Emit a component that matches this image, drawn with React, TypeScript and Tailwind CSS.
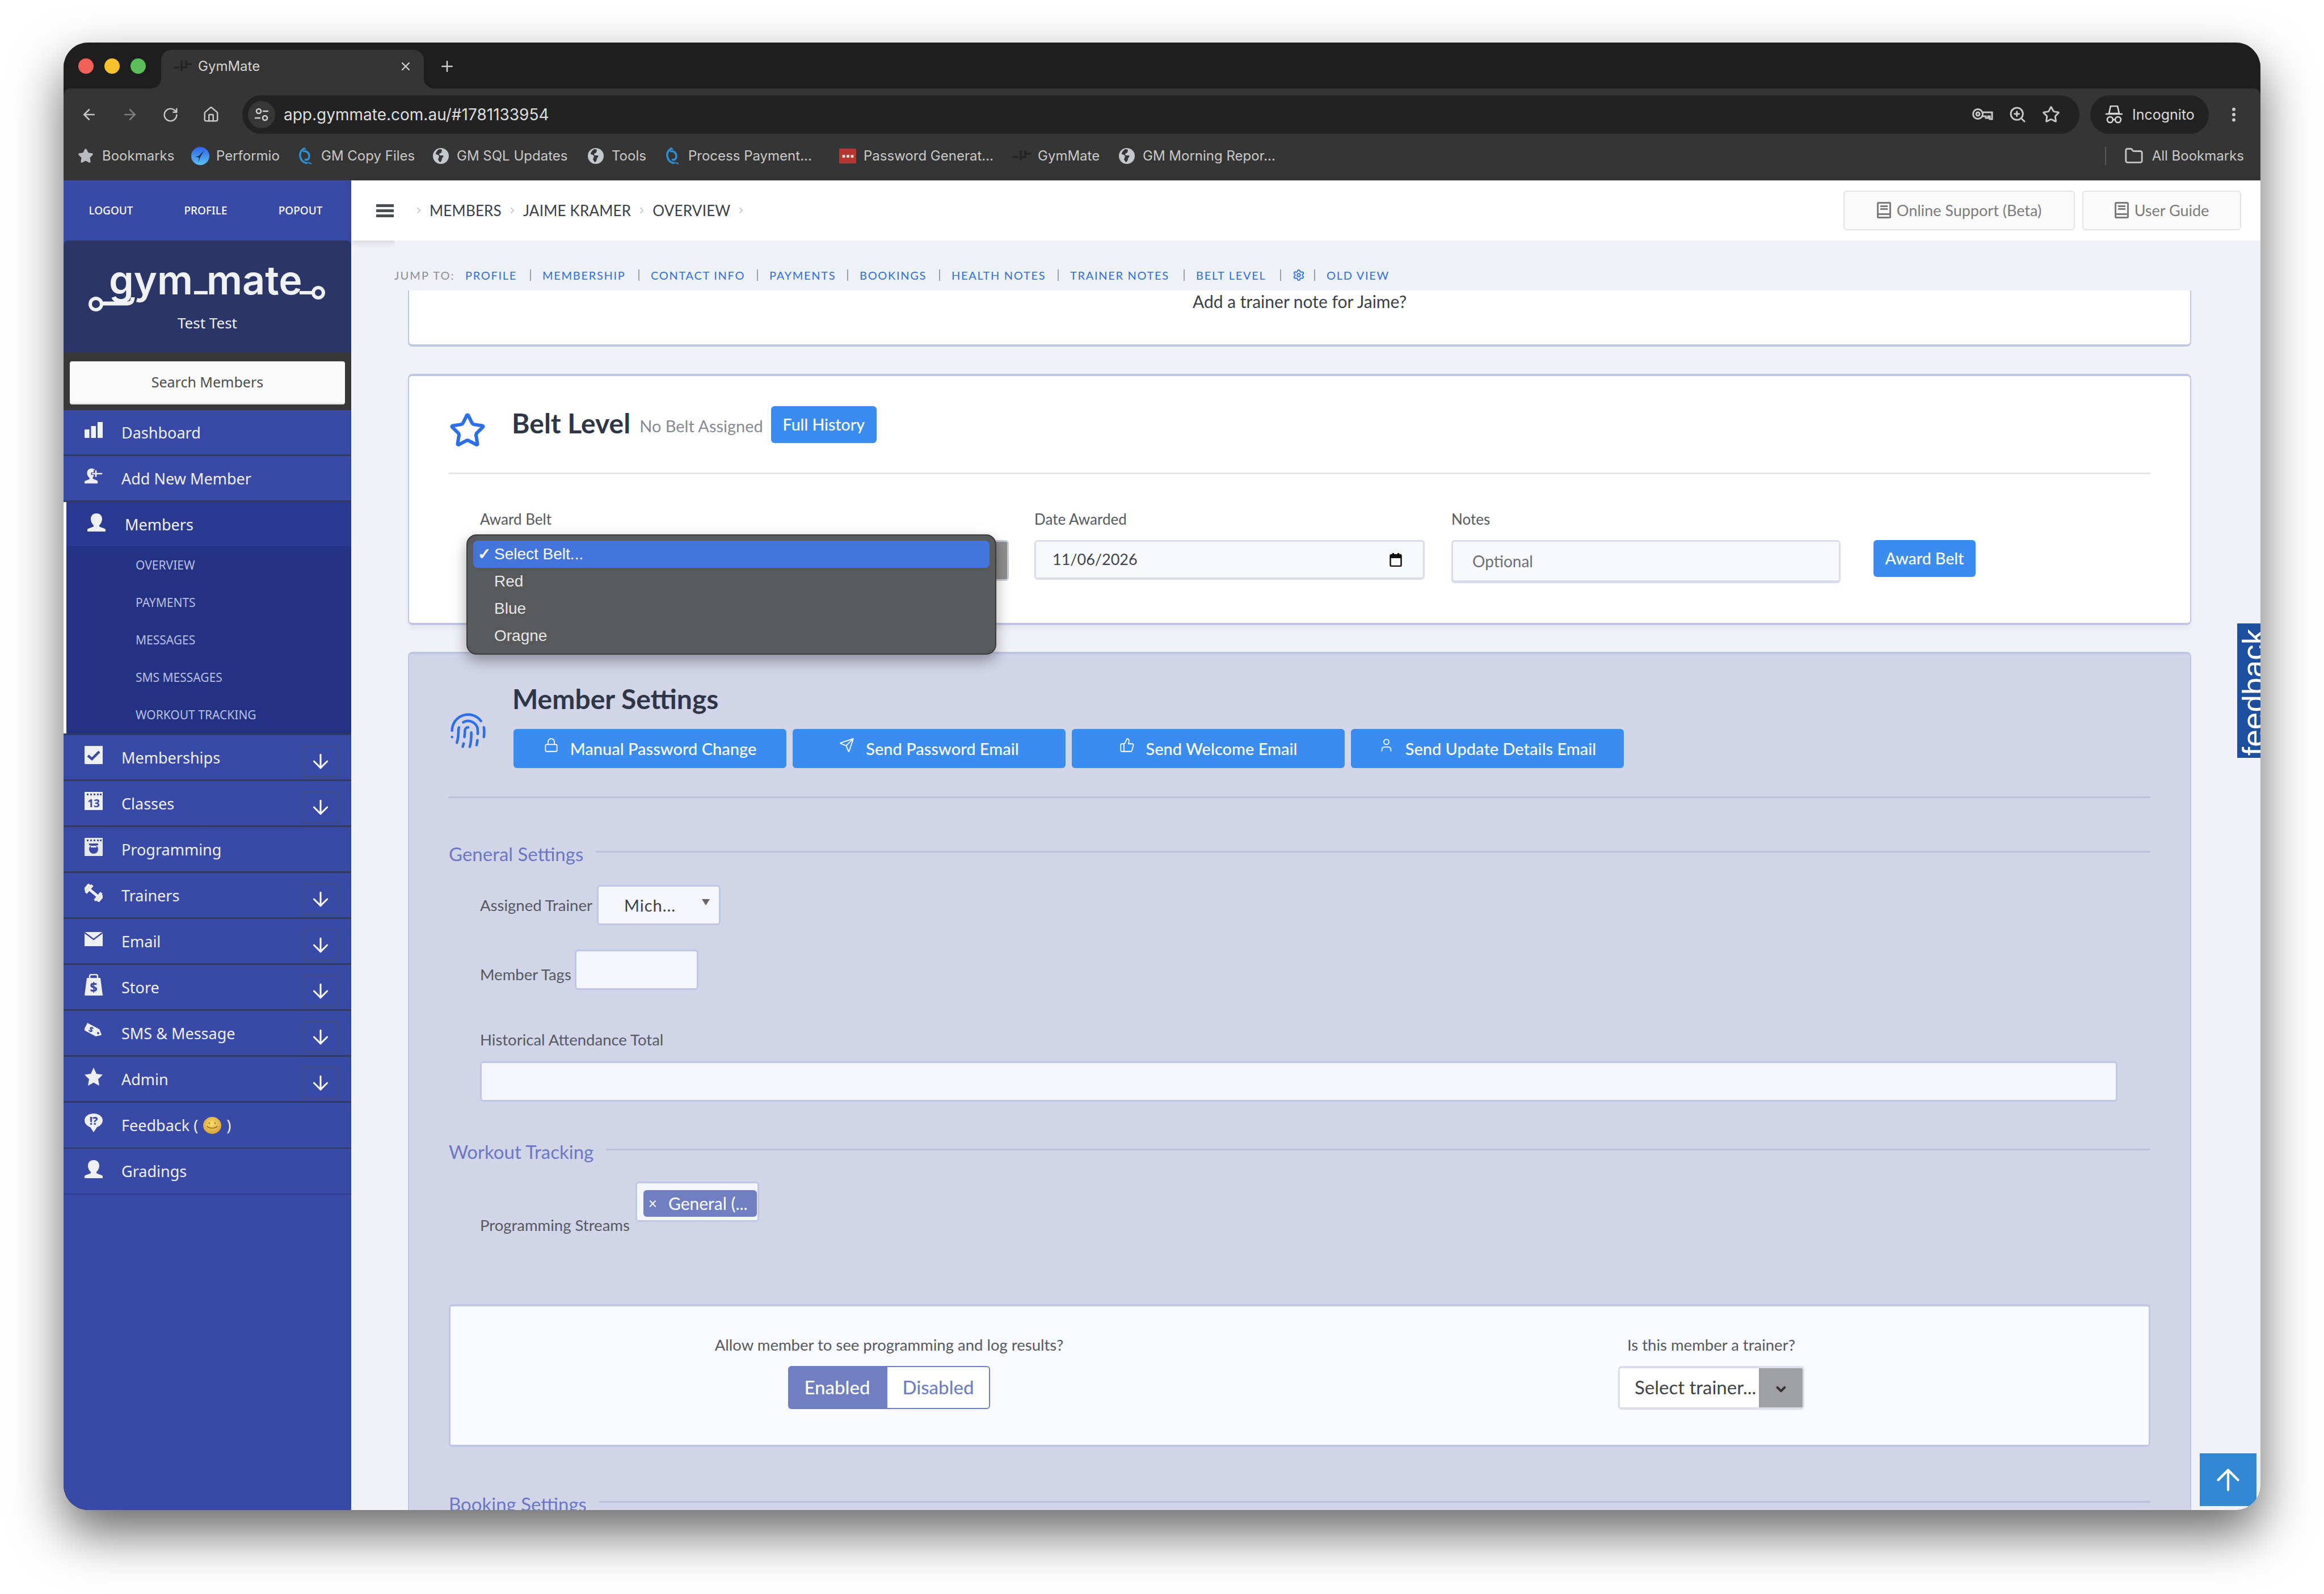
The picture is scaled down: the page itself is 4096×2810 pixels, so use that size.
import React from "react";
import { ArrowLeft, ArrowRight, RotateCw, Home, ZoomIn, Star, Folder, MoreVertical, X, Plus, Lock, Send, ThumbsUp, User, Fingerprint, ChevronRight, Settings, ArrowUp, ArrowDown, ChevronDown } from "lucide-react";

const Globe = () => (
  <svg width="30" height="30" viewBox="0 0 30 30" className="shrink-0">
    <circle cx="15" cy="15" r="14" fill="#c4c7cc" />
    <path d="M12 3c-3 2-6 5-6 9 3 0 5 1 6 4l-2 5 3 5c3-1 4-4 4-7 2-2 3-3 2-5h-6l-1-3 4-2 1-5c-2-1-3-1-5-1z" fill="#353535" />
  </svg>
);
const Spiral = () => (
  <svg width="26" height="32" viewBox="0 0 26 32" className="shrink-0" fill="none">
    <path d="M12 2C5 6 2 12 5 20c2 6 8 9 12 8M9 8c5-2 11 2 11 8s-4 8-8 6" stroke="#2e8fd6" strokeWidth="3.5" />
    <path d="M18 27l6 3M12 2l2 3" stroke="#2e8fd6" strokeWidth="2" />
  </svg>
);
const Performio = () => (
  <svg width="32" height="32" viewBox="0 0 32 32" className="shrink-0">
    <defs>
      <linearGradient id="pf" x1="0" y1="0" x2="0" y2="1">
        <stop offset="0" stopColor="#2f62e8" />
        <stop offset="1" stopColor="#58c2f5" />
      </linearGradient>
    </defs>
    <circle cx="16" cy="16" r="16" fill="url(#pf)" />
    <path d="M23 6L13 16l-6 1 7 2-2 9 5-12z" fill="#20304f" />
  </svg>
);
const GmFav = () => (
  <svg width="32" height="24" viewBox="0 0 32 24" className="shrink-0" fill="none" stroke="#222" strokeWidth="3">
    <path d="M0 14h10M14 2v18M22 2v12H14M22 8h10" />
  </svg>
);
const Bm = ({ icon, label, w, ml }: { icon: React.ReactNode; label: string; w: string; ml: string }) => (
  <div className={`flex items-center ${ml}`}>
    <span className="w-[30px] flex justify-center shrink-0">{icon}</span>
    <span className={`ml-[13px] text-[24px] leading-none text-[#c9c9c9] whitespace-nowrap ${w}`}>{label}</span>
  </div>
);

const Bars = () => (
  <svg width="32" height="28" viewBox="0 0 32 28" fill="#f0f1f5"><rect x="0" y="13" width="8.5" height="15" /><rect x="11.5" y="7" width="8.5" height="21" /><rect x="23" y="0" width="9" height="28" /></svg>
);
const Person = () => (
  <svg width="32" height="32" viewBox="0 0 32 32" fill="#eeeff3"><path d="M16 0c6 0 10 4 10 10 0 5-3 9-5 11v2c3 2 9 3 11 5v4H0v-4c2-2 8-3 11-5v-2c-2-2-5-6-5-11C6 4 10 0 16 0z" /></svg>
);
const PersonPlus = () => (
  <svg width="36" height="30" viewBox="0 0 36 30" fill="#eeeff3"><path d="M14 0c3 0 6 1 7 3h-3v5h-5v5h5v3c-1 1-2 2-2 4 3 2 8 3 10 5v5H0v-4c2-2 8-3 10-5v-2c-2-2-5-5-5-10C5 4 9 0 14 0z" /><path d="M21 4h3v5h11v3H24v5h-3v-5h-6V9h6z" /></svg>
);
const CheckBox = () => (
  <svg width="32" height="32" viewBox="0 0 32 32"><rect width="32" height="32" fill="#eeeff3" /><path d="M6 17l7 6 13-13" fill="none" stroke="#384aa6" strokeWidth="4.5" /></svg>
);
const Cal13 = () => (
  <svg width="32" height="32" viewBox="0 0 32 32"><rect width="32" height="32" fill="#eeeff3" /><g fill="#384aa6"><rect x="4" y="3" width="3" height="3" /><rect x="10" y="3" width="3" height="3" /><rect x="16" y="3" width="3" height="3" /><rect x="22" y="3" width="3" height="3" /><rect x="27" y="3" width="3" height="3" /></g><text x="16" y="27" textAnchor="middle" fontSize="19" fontWeight="700" fontFamily="Noto Sans, sans-serif" fill="#384aa6">13</text></svg>
);
const CalBell = () => (
  <svg width="32" height="32" viewBox="0 0 32 32"><rect width="32" height="32" fill="#e7e8ee" /><g fill="#384aa6"><rect x="4" y="3" width="3" height="3" /><rect x="10" y="3" width="3" height="3" /><rect x="16" y="3" width="3" height="3" /><rect x="22" y="3" width="3" height="3" /><rect x="27" y="3" width="3" height="3" /><circle cx="16" cy="20" r="8" /><path d="M8 10h16v3H21v4H11v-4H8z" /></g><path d="M11 14h10v3H11z" fill="#e7e8ee" /></svg>
);
const Dumbbell = () => (
  <svg width="32" height="32" viewBox="0 0 32 32" fill="#eeeff3"><g transform="rotate(40 16 16)"><rect x="6" y="13.5" width="20" height="5" /><rect x="-2" y="9" width="5" height="14" /><rect x="3" y="7" width="5" height="18" /><rect x="24" y="7" width="5" height="18" /><rect x="29" y="9" width="5" height="14" /></g></svg>
);
const Mail = () => (
  <svg width="32" height="25" viewBox="0 0 32 25"><rect width="32" height="25" fill="#eeeff3" /><path d="M0 1l16 12L32 1" fill="none" stroke="#384aa6" strokeWidth="2.5" /></svg>
);
const Bag = () => (
  <svg width="32" height="38" viewBox="0 0 32 38"><path d="M9 8V4c0-2 1-3 3-3h8c2 0 3 1 3 3v4" fill="none" stroke="#eeeff3" strokeWidth="2.5" /><path d="M4 7h24l4 31H0z" fill="#eeeff3" /><text x="16" y="32" textAnchor="middle" fontSize="23" fontWeight="800" fontFamily="Noto Sans, sans-serif" fill="#384aa6">$</text></svg>
);
const Tag = () => (
  <svg width="32" height="32" viewBox="0 0 32 32"><g transform="rotate(28 16 16)"><path d="M0 9h24l8 7-8 7H0z" fill="#eeeff3" /><text x="11" y="21" textAnchor="middle" fontSize="13" fontWeight="800" fontFamily="Noto Sans, sans-serif" fill="#384aa6">$</text><circle cx="25" cy="16" r="2" fill="#384aa6" /></g></svg>
);
const StarF = () => (
  <svg width="32" height="32" viewBox="0 0 32 32" fill="#eeeff3"><path d="M16 0l5 11 11 1.500-8 8 2 11.500-10-5.500L6 32l2-11.500-8-8 11-1.500z" /></svg>
);
const Bubble = () => (
  <svg width="32" height="34" viewBox="0 0 32 34"><path d="M16 0c9 0 16 5 16 12 0 6-5 10-10 12l-6 9-6-9C5 22 0 18 0 12 0 5 7 0 16 0z" fill="#eeeff3" /><text x="16" y="20" textAnchor="middle" fontSize="19" fontWeight="800" fontFamily="Noto Sans, sans-serif" fill="#384aa6">!?</text></svg>
);
const Smiley = () => (
  <svg width="32" height="30" viewBox="0 0 32 30" className="mx-[9px]"><defs><radialGradient id="sm" cx=".5" cy=".4" r=".6"><stop offset="0" stopColor="#f6dc6e" /><stop offset="1" stopColor="#d8a238" /></radialGradient></defs><ellipse cx="16" cy="15" rx="16" ry="15" fill="url(#sm)" /><path d="M7 16c3 5 15 5 18 0" stroke="#9a6a16" strokeWidth="1.500" fill="none" /><circle cx="11" cy="11" r="1.300" fill="#9a6a16" /><circle cx="21" cy="11" r="1.300" fill="#9a6a16" /></svg>
);
const BookIcon = () => (
  <svg width="25" height="29" viewBox="0 0 25 29" className="shrink-0 -mt-[2px]"><rect x="1.500" y="1.500" width="22" height="26" rx="1.500" fill="none" stroke="#7b7b7b" strokeWidth="3" /><rect x="1" y="20" width="23" height="3" fill="#7b7b7b" /><rect x="6" y="6" width="13" height="3" fill="#7b7b7b" /><rect x="6" y="11" width="13" height="3" fill="#7b7b7b" /></svg>
);

const NavItem = ({ icon, label, arrow, last, thin }: { icon: React.ReactNode; label: React.ReactNode; arrow?: boolean; last?: boolean; thin?: boolean }) => (
  <div className={`relative h-[81px] flex items-center pl-[37px] shrink-0 ${last ? "border-b-2 border-[#2f3f93]" : thin ? "border-b-2 border-[#343a5e]" : "border-b-[3px] border-[#343a5e]"}`}>
    <span className="w-[32px] flex justify-center -mt-[8px] shrink-0">{icon}</span>
    <span className="ml-[33px] text-[27px] leading-none text-[#eff0f6] font-['Noto_Sans',sans-serif] flex items-center">{label}</span>
    {arrow && (
      <span className="absolute right-[23px] top-[18px] w-[63px] h-[56px] border-2 border-[#414a7e] flex items-center justify-center">
        <ArrowDown size={40} color="#ffffff" strokeWidth={1.8} />
      </span>
    )}
  </div>
);

const Logo = () => (
  <svg width="420" height="106" viewBox="0 -20 420 106" fill="none" className="block">
    <text x="36" y="54" fontFamily="Inter, sans-serif" fontSize="70" fontWeight="600" fill="#eff1f2">gym</text>
    <text x="208" y="54" fontFamily="Inter, sans-serif" fontSize="70" fontWeight="600" fill="#eff1f2">mate</text>
    <circle cx="13" cy="71" r="10" stroke="#eff1f2" strokeWidth="6" />
    <path d="M23 70h44c8 0 11-3 11-11" stroke="#eff1f2" strokeWidth="7" />
    <path d="M186 51h24" stroke="#eff1f2" strokeWidth="6" />
    <path d="M372 51h24" stroke="#eff1f2" strokeWidth="6" />
    <circle cx="405" cy="51" r="9" stroke="#eff1f2" strokeWidth="6" />
  </svg>
);

const Sidebar = () => (
  <aside className="w-[507px] shrink-0 bg-[#384aa6] flex flex-col font-['Noto_Sans',sans-serif]">
    <div className="h-[106px] grid grid-cols-3 pr-[6px] items-center text-center text-[19px] font-medium text-white">
      <span>LOGOUT</span>
      <span>PROFILE</span>
      <span>POPOUT</span>
    </div>
    <div className="h-[197px] bg-[#2a3668] rounded-t-[8px] flex flex-col items-center pt-[21px]">
      <Logo />
      <span className="mt-[5px] text-[26px] leading-none text-[#f0f1f4]">Test Test</span>
    </div>
    <div className="h-[102px] bg-[#373737] px-[11px] pt-[16px]">
      <div className="h-[76px] rounded-[4px] bg-[#fafafa] border-b-[3px] border-[#e6e6e6] flex items-center justify-center text-[25px] text-[#4d4d4d]">Search Members</div>
    </div>
    <NavItem icon={<Bars />} label="Dashboard" />
    <NavItem icon={<PersonPlus />} label="Add New Member" />
    <div className="border-l-[5px] border-white">
      <div className="h-[78px] bg-[#2a3a90] flex items-center pl-[37px]">
        <span className="w-[32px] -mt-[6px]"><Person /></span>
        <span className="ml-[34px] text-[27px] leading-none text-[#f0f1f6]">Members</span>
      </div>
      <div className="bg-[#243283] pt-[1px] text-[21px] text-[#b9c0e3] flex flex-col">
        {["OVERVIEW", "PAYMENTS", "MESSAGES", "SMS MESSAGES", "WORKOUT TRACKING"].map((s) => (
          <div key={s} className="h-[66px] flex items-center pl-[122px]">{s}</div>
        ))}
      </div>
    </div>
    <div className="h-[3px] -mt-[1px] bg-[#343a5e]" />
    <NavItem icon={<CheckBox />} label="Memberships" arrow />
    <NavItem icon={<Cal13 />} label="Classes" arrow />
    <NavItem icon={<CalBell />} label="Programming" />
    <NavItem icon={<Dumbbell />} label="Trainers" arrow />
    <NavItem icon={<Mail />} label="Email" arrow />
    <NavItem icon={<Bag />} label="Store" arrow />
    <NavItem icon={<Tag />} label="SMS & Message" arrow />
    <NavItem icon={<StarF />} label="Admin" arrow />
    <NavItem icon={<Bubble />} label={<>Feedback (<Smiley />)</>} thin />
    <NavItem icon={<Person />} label="Gradings" last />
  </aside>
);

const Chrome = () => (
  <div className="shrink-0 font-['Inter',sans-serif]">
    <div className="h-[81px] bg-[#1e1e1e] flex items-end pl-[26px]">
      <div className="flex gap-[19px] self-center mt-[2px]">
        <span className="w-[27px] h-[27px] rounded-full bg-[#f36059]" />
        <span className="w-[27px] h-[27px] rounded-full bg-[#f5c32c]" />
        <span className="w-[27px] h-[27px] rounded-full bg-[#5bbe58]" />
      </div>
      <div className="relative ml-[27px] w-[463px] h-[68px] bg-[#353535] rounded-t-[18px] flex items-center pl-[22px] pb-[10px]">
        <svg width="18" height="18" viewBox="0 0 18 18" className="absolute -left-[18px] bottom-0"><path d="M18 0v18H0C10 18 18 10 18 0z" fill="#353535" /></svg>
        <svg width="18" height="18" viewBox="0 0 18 18" className="absolute -right-[18px] bottom-0"><path d="M0 0v18h18C8 18 0 10 0 0z" fill="#353535" /></svg>
        <GmFav />
        <span className="ml-[11px] text-[24px] leading-none text-[#d4d4d4]">GymMate</span>
        <X size={24} color="#d4d4d4" strokeWidth={2.2} className="absolute right-[20px] top-[17px]" />
      </div>
      <Plus size={30} color="#cfcfcf" strokeWidth={2} className="ml-[26px] mb-[24px]" />
    </div>
    <div className="h-[162px] bg-[#353535] rounded-t-[12px]">
      <div className="flex items-center pt-[12px] h-[80px]">
        <div className="w-[315px] pl-[30px] flex items-center gap-[42px] shrink-0">
          <ArrowLeft size={30} color="#c7c7c7" strokeWidth={2} />
          <ArrowRight size={30} color="#7e7e7e" strokeWidth={2} />
          <RotateCw size={29} color="#c7c7c7" strokeWidth={2} />
          <Home size={30} color="#c7c7c7" strokeWidth={2} />
        </div>
        <div className="w-[3238px] h-[68px] rounded-full bg-[#222222] flex items-center pl-[10px] pr-[34px] shrink-0">
          <span className="w-[48px] h-[48px] rounded-full bg-[#373737] flex items-center justify-center">
            <svg width="26" height="26" viewBox="0 0 26 26" fill="none" stroke="#d0d0d0" strokeWidth="2.6"><circle cx="8" cy="7" r="4" /><path d="M15 7h10M1 19h10" /><circle cx="19" cy="19" r="4" /></svg>
          </span>
          <span className="ml-[15px] text-[28px] leading-none text-[#dedede]">app.gymmate.com.au/#1781133954</span>
          <span className="ml-auto flex items-center gap-[27px]">
            <svg width="37" height="30" viewBox="0 0 37 30" fill="none" stroke="#c7c7c7" strokeWidth="3"><circle cx="10" cy="14" r="8.500" /><circle cx="10" cy="14" r="3" /><path d="M18 11h17v12h-4v-5h-3v3h-4v-3h-6" /></svg>
            <ZoomIn size={32} color="#c7c7c7" strokeWidth={2.2} />
            <Star size={32} color="#c7c7c7" strokeWidth={2.2} />
          </span>
        </div>
        <div className="ml-[19px] w-[209px] h-[68px] rounded-full bg-[#222222] flex items-center pl-[26px] gap-[16px] shrink-0">
          <svg width="32" height="32" viewBox="0 0 32 32" fill="none" stroke="#d8d8d8" strokeWidth="2.6"><path d="M10 1h12l3 13H7z" /><path d="M1 15h30" /><circle cx="9" cy="25" r="5" /><circle cx="23" cy="25" r="5" /><path d="M14 25h4" /></svg>
          <span className="text-[25px] leading-none text-[#dcdcdc]">Incognito</span>
        </div>
        <MoreVertical size={32} color="#cfcfcf" strokeWidth={2.4} className="ml-[28px]" />
      </div>
      <div className="flex items-center h-[72px] pl-[25px] pr-[29px] pt-[6px]">
        <div className="flex items-center text-[24px] leading-none text-[#c9c9c9]">
          <Star size={28} fill="#b8bbc0" color="#b8bbc0" className="mr-[15px]" />
          <span className="w-[126px]">Bookmarks</span>
        </div>
        <Bm ml="ml-[32px]" w="w-[110px]" icon={<Performio />} label="Performio" />
        <Bm ml="ml-[32px]" w="w-[164px]" icon={<Spiral />} label="GM Copy Files" />
        <Bm ml="ml-[32px]" w="w-[196px]" icon={<Globe />} label="GM SQL Updates" />
        <Bm ml="ml-[34px]" w="w-[58px]" icon={<Globe />} label="Tools" />
        <Bm ml="ml-[34px]" w="w-[216px]" icon={<Spiral />} label="Process Payment..." />
        <Bm ml="ml-[50px]" w="w-[227px]" icon={<svg width="32" height="28" viewBox="0 0 32 28"><rect width="32" height="28" rx="2" fill="#b6372f" /><g fill="#f7e4e1"><rect x="6" y="12" width="5" height="5" /><rect x="14" y="12" width="5" height="5" /><rect x="22" y="12" width="5" height="5" /></g></svg>} label="Password Generat..." />
        <Bm ml="ml-[37px]" w="w-[110px]" icon={<GmFav />} label="GymMate" />
        <Bm ml="ml-[32px]" w="w-[232px]" icon={<Globe />} label="GM Morning Repor..." />
        <div className="ml-auto flex items-center">
          <span className="w-[2px] h-[32px] bg-[#5a5a5a]" />
          <Folder size={34} color="#c7c7c7" strokeWidth={2} className="ml-[32px]" />
          <span className="ml-[15px] text-[24px] leading-none text-[#c9c9c9] whitespace-nowrap">All Bookmarks</span>
        </div>
      </div>
    </div>
  </div>
);

const Header = () => (
  <div className="relative z-10 h-[106px] shrink-0 bg-white flex items-center shadow-[0_4px_12px_rgba(0,0,0,0.12)] font-['Lato',sans-serif]">
    <svg width="31" height="23" viewBox="0 0 31 23" fill="#4a4d52" className="ml-[44px]"><rect width="31" height="5" /><rect y="9" width="31" height="5" /><rect y="18" width="31" height="5" /></svg>
    <div className="ml-[35px] flex items-center text-[26px] leading-none text-[#3b4048] tracking-[0.2px]">
      <ChevronRight size={18} color="#b7b7b7" strokeWidth={1.8} className="mr-[10px]" />
      <span>MEMBERS</span>
      <ChevronRight size={18} color="#b7b7b7" strokeWidth={1.8} className="mx-[10px]" />
      <span>JAIME KRAMER</span>
      <ChevronRight size={18} color="#b7b7b7" strokeWidth={1.8} className="mx-[10px]" />
      <span>OVERVIEW</span>
      <ChevronRight size={18} color="#b7b7b7" strokeWidth={1.8} className="ml-[10px]" />
    </div>
    <div className="ml-auto mr-[34px] flex gap-[13px]">
      {[["Online Support (Beta)", "w-[408px]"], ["User Guide", "w-[280px]"]].map(([t, w]) => (
        <div key={t} className={`${w} h-[70px] rounded-[6px] bg-[#fafafa] border-2 border-[#e4e4e4] flex items-center justify-center gap-[10px] text-[27px] text-[#7b7b7b]`}>
          <BookIcon />
          <span>{t}</span>
        </div>
      ))}
    </div>
  </div>
);

const jump = [
  ["PROFILE", "w-[136px]"],
  ["MEMBERSHIP", "w-[191px]"],
  ["CONTACT INFO", "w-[209px]"],
  ["PAYMENTS", "w-[159px]"],
  ["BOOKINGS", "w-[162px]"],
  ["HEALTH NOTES", "w-[209px]"],
  ["TRAINER NOTES", "w-[222px]"],
  ["BELT LEVEL", "w-[170px]"],
];
const Jump = () => (
  <div className="relative z-20 ml-[76px] h-[88px] shrink-0 bg-[#eef1f6] flex items-center pt-[33px] text-[20px] leading-none tracking-[1.7px] font-['Lato',sans-serif] text-[#2f6fe0] whitespace-nowrap">
    <span className="text-[#8a8f98] w-[125px] tracking-[2.1px]">JUMP TO:</span>
    {jump.map(([j, w]) => (
      <div key={j} className={`flex items-center ${w}`}>
        <span>{j}</span>
        <span className="ml-auto mr-[20px] w-[2px] h-[20px] bg-[#9aa0aa]" />
      </div>
    ))}
    <div className="flex items-center w-[60px]">
      <Settings size={22} color="#2f6fe0" strokeWidth={2} />
      <span className="ml-auto mr-[20px] w-[2px] h-[20px] bg-[#9aa0aa]" />
    </div>
    <span>OLD VIEW</span>
  </div>
);

const SectionHead = ({ title, className }: { title: string; className: string }) => (
  <div className={`flex items-center ${className}`}>
    <span className="text-[33px] leading-none text-[#6a78c4] whitespace-nowrap">{title}</span>
    <span className="ml-[22px] flex-1 h-[3px] bg-[#bcbfda] -mt-[8px]" />
  </div>
);

const actions: [string, typeof Lock][] = [
  ["Manual Password Change", Lock],
  ["Send Password Email", Send],
  ["Send Welcome Email", ThumbsUp],
  ["Send Update Details Email", User],
];

const Content = () => (
  <div className="flex-1 overflow-hidden bg-[#f1f2f8] pl-[100px] pr-[122px] font-['Lato',sans-serif]">
    <div className="h-[99px] bg-white border-x-2 border-b-[4px] border-[#c0c6e6] rounded-b-[8px] text-center text-[30px] leading-none pt-[4px] text-[#3b3f46]">Add a trainer note for Jaime?</div>

    <div className="relative mt-[48px] h-[443px] bg-white border-x-2 border-y-[4px] border-[#c0c6e6] rounded-[8px] px-[70px] shadow-[0_6px_10px_rgba(60,70,120,0.06)]">
      <div className="h-[173px] border-b-[3px] border-[#e6e6e6] flex items-start">
        <Star size={66} color="#2b6fed" strokeWidth={2.2} className="mt-[63px] shrink-0" />
        <span className="ml-[45px] mt-[59px] text-[48px] leading-none font-bold text-[#2f3747]">Belt Level</span>
        <span className="ml-[16px] mt-[73px] text-[29px] leading-none text-[#858a92]">No Belt Assigned</span>
        <span className="ml-[14px] mt-[53px] w-[186px] h-[65px] rounded-[6px] bg-[#3a8cee] flex items-center justify-center text-[28.5px] font-medium text-white">Full History</span>
      </div>
      <div className="relative flex pl-[55px] pt-[62px]">
        <div className="w-[932px] shrink-0">
          <div className="h-[34px] text-[26px] leading-[34px] text-[#555960]">Award Belt</div>
          <div className="mt-[20px] h-[72px] rounded-[6px] border-[3px] border-[#c8cbd8] bg-[#8e8e8e]" />
        </div>
        <div className="ml-[45px] w-[688px] shrink-0">
          <div className="h-[34px] text-[26px] leading-[34px] text-[#555960]">Date Awarded</div>
          <div className="mt-[20px] h-[70px] rounded-[6px] border-[3px] border-b-[4px] border-[#dadeea] bg-[#f8f9fd] flex items-center pl-[29px] pr-[37px] text-[27px] text-[#3f4349]">
            <span>11/06/2026</span>
            <svg width="22" height="24" viewBox="0 0 22 24" className="ml-auto"><rect x="1.500" y="3" width="19" height="20" rx="2" fill="none" stroke="#111" strokeWidth="2.500" /><rect x="1.500" y="3" width="19" height="6" fill="#111" /><rect x="5" y="0" width="3" height="4" /><rect x="14" y="0" width="3" height="4" /></svg>
          </div>
        </div>
        <div className="ml-[47px] w-[686px] shrink-0">
          <div className="h-[34px] text-[26px] leading-[34px] text-[#555960]">Notes</div>
          <div className="mt-[20px] h-[76px] rounded-[6px] border-[3px] border-b-[5px] border-[#dadeea] bg-[#f8f9fd] flex items-center pl-[34px] text-[28px] text-[#6c7077]">Optional</div>
        </div>
        <span className="ml-[58px] mt-[54px] w-[180px] h-[65px] rounded-[6px] bg-[#3a8cee] flex items-center justify-center text-[28.5px] font-medium text-white">Award Belt</span>
        <div className="absolute left-[31px] top-[106px] w-[934px] h-[212px] rounded-[18px] border-[2px] border-[#3b3b3d] bg-[#58595b] shadow-[0_10px_24px_rgba(0,0,0,0.35)] text-[28px] text-[#e6e6e6] px-[10px] pt-[9px] font-['Liberation_Sans',sans-serif] z-10">
          <div className="h-[48px] rounded-[8px] bg-[#4475dd] text-white flex items-center pl-[37px] relative">
            <span className="absolute left-[8px] text-[28px] font-bold">✓</span>Select Belt...
          </div>
          <div className="h-[48px] flex items-center pl-[37px]">Red</div>
          <div className="h-[48px] flex items-center pl-[37px]">Blue</div>
          <div className="h-[48px] flex items-center pl-[37px]">Oragne</div>
        </div>
      </div>
    </div>

    <div className="mt-[47px] h-[1700px] bg-[#d2d5e8] border-x-2 border-t-[4px] border-[#c0c6e6] rounded-t-[8px] px-[70px]">
      <div className="h-[254px] border-b-[3px] border-[#bcbfda] flex">
        <Fingerprint size={68} color="#2b6fed" strokeWidth={1.6} className="mt-[101px] shrink-0" />
        <div className="ml-[44px]">
          <div className="mt-[55px] text-[48px] leading-none font-bold text-[#2f3747]">Member Settings</div>
          <div className="mt-[29px] ml-[2px] flex gap-[11px]">
            {actions.map(([t, I]) => (
              <div key={t} className="w-[481px] h-[69px] rounded-[6px] bg-[#3a8cee] flex items-center justify-center gap-[20px] text-[29px] font-medium text-white">
                <I size={27} color="#fff" strokeWidth={1.6} className="-mt-[12px]" />
                <span>{t}</span>
              </div>
            ))}
          </div>
        </div>
      </div>

      <SectionHead title="General Settings" className="mt-[82px]" />
      <div className="ml-[55px] mt-[38px] flex items-center">
        <span className="text-[27.5px] text-[#555960] mr-[8px]">Assigned Trainer</span>
        <div className="relative w-[218px] h-[71px] rounded-[6px] border-[3px] border-[#c0c6e6] bg-[#f5f6fb] flex items-center pl-[45px] text-[29px] tracking-[1px] text-[#3c3f45]">
          Mich...
          <span className="absolute right-[16px] top-[22px] w-0 h-0 border-x-[7px] border-x-transparent border-t-[11px] border-t-[#666]" />
        </div>
      </div>
      <div className="ml-[55px] mt-[43px] flex items-end">
        <span className="text-[27.5px] leading-[32px] text-[#555960] mr-[6px] mb-[11px]">Member Tags</span>
        <div className="w-[218px] h-[71px] rounded-[6px] border-[3px] border-[#c0c6e6] bg-[#f5f6fb]" />
      </div>
      <div className="ml-[55px] mt-[74px] text-[27.5px] leading-none text-[#555960]">Historical Attendance Total</div>
      <div className="ml-[55px] mt-[24px] w-[2886px] h-[71px] rounded-[6px] border-[3px] border-[#c0c6e6] bg-[#f5f6fb]" />

      <SectionHead title="Workout Tracking" className="mt-[72px]" />
      <div className="ml-[55px] mt-[36px] flex items-start">
        <span className="mt-[61px] text-[27.5px] leading-[32px] text-[#555960] mr-[10px]">Programming Streams</span>
        <div className="w-[218px] h-[71px] rounded-[6px] border-[3px] border-[#c0c6e6] bg-[#f5f6fb] pl-[11px] pt-[12px]">
          <div className="w-[200px] h-[47px] rounded-[6px] bg-[#6f7fc1] flex items-center pl-[9px] text-white text-[30px] leading-none whitespace-nowrap overflow-hidden">
            <span className="text-[26px] mr-[20px]">×</span>General (...
          </div>
        </div>
      </div>

      <div className="mt-[123px] h-[252px] w-[2999px] bg-[#f9faff] rounded-[6px] border-x-[3px] border-y-[4px] border-[#c0c6e6] flex">
        <div className="w-[1546px] flex flex-col items-center pt-[51px]">
          <span className="text-[27.5px] leading-[34px] text-[#555960]">Allow member to see programming and log results?</span>
          <div className="mt-[20px] h-[76px] flex text-[33px]">
            <span className="w-[173px] rounded-l-[6px] bg-[#6f7fc1] text-white font-medium flex items-center justify-center">Enabled</span>
            <span className="w-[183px] rounded-r-[6px] border-2 border-[#6f7fc1] bg-white text-[#6f7fc1] font-medium flex items-center justify-center">Disabled</span>
          </div>
        </div>
        <div className="ml-[276px] flex flex-col items-center w-[800px] pt-[51px]">
          <span className="text-[27.5px] leading-[34px] text-[#555960]">Is this member a trainer?</span>
          <div className="mt-[20px] w-[328px] h-[77px] rounded-[6px] border-x-[3px] border-t-[4px] border-b-[4px] border-[#dadeea] bg-white flex overflow-hidden">
            <span className="w-[245px] shrink-0 overflow-hidden flex items-center pl-[26px] text-[33px] text-[#3f4349] whitespace-nowrap">Select trainer...</span>
            <span className="flex-1 bg-[#9e9fa3] flex items-center justify-center pt-[6px]"><ChevronDown size={26} color="#333" strokeWidth={3.6} /></span>
          </div>
        </div>
      </div>

      <SectionHead title="Booking Settings" className="mt-[84px]" />
    </div>
  </div>
);

export default function App() {
  return (
    <div className="w-[4096px] h-[2810px] bg-white pl-[112px] pt-[75px]">
      <div className="relative w-[3872px] h-[2587px] rounded-[44px] overflow-hidden bg-[#1e1e1e] flex flex-col shadow-[0_40px_90px_rgba(0,0,0,0.6)]">
        <Chrome />
        <div className="flex-1 flex min-h-0">
          <Sidebar />
          <div className="flex-1 min-w-0 flex flex-col bg-[#f1f2f8]">
            <Header />
            <Jump />
            <Content />
          </div>
        </div>
        <div className="absolute right-0 top-[1024px] w-[41px] h-[237px] bg-[#1c4f9e] overflow-hidden z-30">
          <span className="absolute left-[2px] bottom-[4px] origin-bottom-left text-white text-[55px] leading-none whitespace-nowrap font-['Liberation_Sans',sans-serif]" style={{ transform: "rotate(-90deg) translateY(100%)" }}>feedback</span>
        </div>
        <div className="absolute left-[3765px] top-[2487px] w-[100px] h-[93px] bg-[#3288d3] flex items-center justify-center z-30">
          <ArrowUp size={60} color="#fff" strokeWidth={1.7} />
        </div>
      </div>
    </div>
  );
}
